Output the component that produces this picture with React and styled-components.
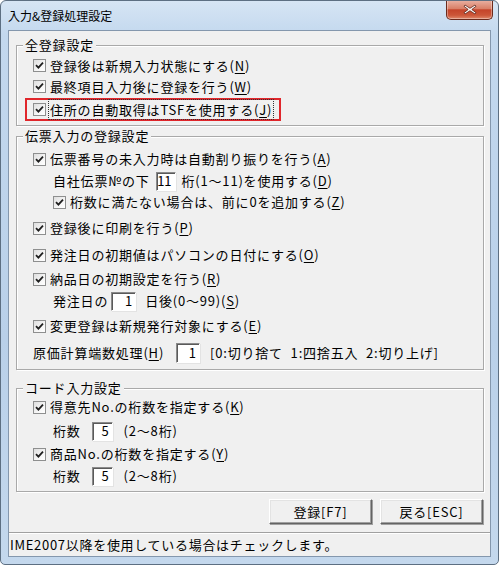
import React from 'react';
import styled, { createGlobalStyle } from 'styled-components';

const GlobalStyle = createGlobalStyle`
  body {
    margin: 0;
    background: #ffffff;
    font-family: "Noto Sans CJK JP", "Noto Sans", sans-serif;
  }
`;

// Window frame
const Window = styled.div`
  width: 499px;
  height: 565px;
  box-sizing: border-box;
  border: 1px solid #5d6f82;
  border-radius: 6px 6px 5px 5px;
  background: linear-gradient(to bottom, #d6e5f4 0%, #c3d8ee 6%, #b9d0e9 60%, #c4d8ed 100%);
  display: flex;
  flex-direction: column;
  overflow: hidden;
`;

const TitleBar = styled.div`
  height: 29px;
  display: flex;
  align-items: flex-start;
  padding-left: 7px;
  padding-right: 5px;
`;

const Title = styled.div`
  align-self: center;
  font-size: 12px;
  color: #000;
  line-height: 16px;
  margin-top: 1px;
`;

const CloseButton = styled.div`
  margin-left: auto;
  margin-top: -1px;
  width: 47px;
  height: 20px;
  box-sizing: border-box;
  border: 1px solid #6b2a1c;
  border-top: none;
  border-radius: 0 0 5px 5px;
  background: linear-gradient(to bottom, #eab3a5 0%, #d98068 45%, #c5442a 52%, #cc5638 80%, #e0896c 100%);
  box-shadow: inset 0 0 0 1px rgba(255, 255, 255, 0.35);
  display: flex;
  align-items: center;
  justify-content: center;
`;

const Client = styled.div`
  margin: 0 7px;
  height: 527px;
  box-sizing: border-box;
  border: 1px solid #8497ad;
  background: #f0f0f0;
  display: flex;
  flex-direction: column;
  font-size: 13px;
  letter-spacing: 0.8px;
  color: #000;
`;

// Group box
const Group = styled.div`
  position: relative;
  margin: ${(p) => p.$mt}px 6px 0 7px;
  height: ${(p) => p.$h}px;
  box-sizing: border-box;
  border: 1px solid #a9a9a9;
  box-shadow: inset 1px 1px 0 #fff, 1px 1px 0 #fff;
  padding-top: ${(p) => p.$pt}px;
  display: flex;
  flex-direction: column;
`;

const Caption = styled.span`
  position: absolute;
  top: -10px;
  left: 6px;
  padding: 0 2px;
  background: #f0f0f0;
  line-height: 18px;
`;

const Row = styled.div`
  height: ${(p) => p.$h || 22}px;
  margin-top: ${(p) => p.$mt || 0}px;
  padding-left: ${(p) => (p.$indent ? 36 : 16)}px;
  display: flex;
  align-items: center;
  white-space: pre;
  line-height: 16px;
`;

const Highlight = styled.div`
  margin: 1px 0 0 8px;
  width: 256px;
  height: 23px;
  box-sizing: border-box;
  border: 2px solid #e0262b;
  display: flex;
  align-items: center;
  padding-left: 6px;
`;

const Box = styled.span`
  width: 13px;
  height: 13px;
  box-sizing: border-box;
  border: 1px solid #8e8f8f;
  background: linear-gradient(135deg, #dedede 0%, #f6f6f6 60%, #ffffff 100%);
  margin-right: 4px;
  flex: none;
  display: flex;
  align-items: center;
  justify-content: center;
`;

const Focus = styled.span`
  outline: 1px dotted #333;
  outline-offset: 0px;
  padding: 0 1px;
  margin-left: -1px;
`;

const Key = styled.u`
  text-underline-offset: 2px;
`;

const Legend = styled.span`
  word-spacing: 4px;
`;

const NumBox = styled.span`
  width: ${(p) => p.$w}px;
  height: ${(p) => p.$h || 19}px;
  box-sizing: border-box;
  margin-left: ${(p) => p.$ml}px;
  margin-right: ${(p) => p.$mr}px;
  border: 1px solid;
  border-color: #8a8a8a #ffffff #ffffff #8a8a8a;
  box-shadow: inset 1px 1px 0 #5a5a5a, 1px 1px 0 #e3e3e3;
  background: #fff;
  display: flex;
  align-items: center;
  justify-content: flex-end;
  padding-right: 3px;
  letter-spacing: 0;
  flex: none;
`;

const ButtonBar = styled.div`
  margin-top: 7px;
  padding-right: 7px;
  display: flex;
  justify-content: flex-end;
  gap: 8px;
`;

const Button = styled.button`
  width: 103px;
  height: 25px;
  box-sizing: border-box;
  border: 1px solid;
  border-color: #ffffff #646464 #646464 #ffffff;
  box-shadow: 1px 1px 0 #a0a0a0, inset -1px -1px 0 #a0a0a0, inset 1px 1px 0 #e3e3e3;
  background: #f0f0f0;
  font-family: inherit;
  font-size: 13px;
  letter-spacing: 0.8px;
  color: #000;
  padding: 0;
`;

const StatusBar = styled.div`
  margin-top: 8px;
  flex: 1;
  border-top: 1px solid #a0a0a0;
  box-shadow: inset 0 1px 0 #fff;
  display: flex;
  align-items: center;
  padding-left: 1px;
  letter-spacing: 0.7px;
`;

const Check = ({ children }) => (
  <>
    <Box>
      <svg width="9" height="9" viewBox="0 0 9 9">
        <path d="M1 4.2 L3.4 6.6 L8 1.6" stroke="#1f1f1f" strokeWidth="1.8" fill="none" />
      </svg>
    </Box>
    {children}
  </>
);

const App = () => (
  <>
    <GlobalStyle />
    <Window>
      <TitleBar>
        <Title>入力&amp;登録処理設定</Title>
        <CloseButton>
          <svg width="14" height="11" viewBox="0 0 14 11">
            <path
              d="M2 1 L7 4.3 L12 1 L13 2.3 L8.8 5.5 L13 8.7 L12 10 L7 6.7 L2 10 L1 8.7 L5.2 5.5 L1 2.3 Z"
              fill="#fff"
              stroke="#5a2216"
              strokeWidth="0.8"
            />
          </svg>
        </CloseButton>
      </TitleBar>

      <Client>
        <Group $mt={14} $h={81} $pt={9}>
          <Caption>全登録設定</Caption>
          <Row $h={21}>
            <Check>
              登録後は新規入力状態にする(<Key>N</Key>)
            </Check>
          </Row>
          <Row $h={21}>
            <Check>
              最終項目入力後に登録を行う(<Key>W</Key>)
            </Check>
          </Row>
          <Highlight>
            <Check>
              <Focus>
                住所の自動取得はTSFを使用する(<Key>J</Key>)
              </Focus>
            </Check>
          </Highlight>
        </Group>

        <Group $mt={10} $h={234} $pt={11}>
          <Caption>伝票入力の登録設定</Caption>
          <Row>
            <Check>
              伝票番号の未入力時は自動割り振りを行う(<Key>A</Key>)
            </Check>
          </Row>
          <Row $indent>
            自社伝票№の下
            <NumBox $w={20} $ml={6} $mr={6}>11</NumBox>
            桁(1～11)を使用する(<Key>D</Key>)
          </Row>
          <Row $indent $mt={-1}>
            <Check>
              桁数に満たない場合は、前に0を追加する(<Key>Z</Key>)
            </Check>
          </Row>
          <Row $mt={4}>
            <Check>
              登録後に印刷を行う(<Key>P</Key>)
            </Check>
          </Row>
          <Row $mt={5}>
            <Check>
              発注日の初期値はパソコンの日付にする(<Key>O</Key>)
            </Check>
          </Row>
          <Row $mt={2}>
            <Check>
              納品日の初期設定を行う(<Key>R</Key>)
            </Check>
          </Row>
          <Row $indent>
            発注日の
            <NumBox $w={25} $ml={3} $mr={9}>1</NumBox>
            日後(0～99)(<Key>S</Key>)
          </Row>
          <Row $mt={3}>
            <Check>
              変更登録は新規発行対象にする(<Key>E</Key>)
            </Check>
          </Row>
          <Row $mt={5}>
            原価計算端数処理(<Key>H</Key>)
            <NumBox $w={24} $h={20} $ml={12} $mr={10}>1</NumBox>
            <Legend>[0:切り捨て 1:四捨五入 2:切り上げ]</Legend>
          </Row>
        </Group>

        <Group $mt={18} $h={104} $pt={7}>
          <Caption>コード入力設定</Caption>
          <Row>
            <Check>
              得意先No.の桁数を指定する(<Key>K</Key>)
            </Check>
          </Row>
          <Row $indent $mt={2}>
            桁数
            <NumBox $w={21} $ml={11} $mr={11}>5</NumBox>
            (2～8桁)
          </Row>
          <Row $mt={1}>
            <Check>
              商品No.の桁数を指定する(<Key>Y</Key>)
            </Check>
          </Row>
          <Row $indent>
            桁数
            <NumBox $w={21} $ml={11} $mr={11}>5</NumBox>
            (2～8桁)
          </Row>
        </Group>

        <ButtonBar>
          <Button>登録[F7]</Button>
          <Button>戻る[ESC]</Button>
        </ButtonBar>

        <StatusBar>IME2007以降を使用している場合はチェックします。</StatusBar>
      </Client>
    </Window>
  </>
);

export default App;
